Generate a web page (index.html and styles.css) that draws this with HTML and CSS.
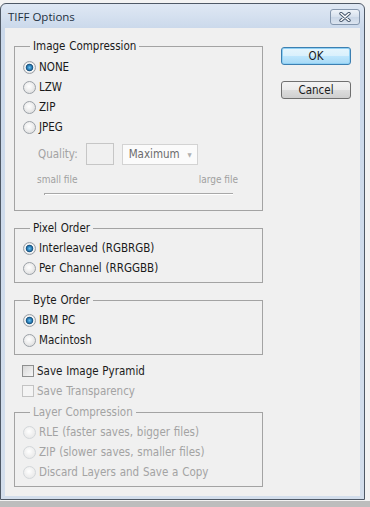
FILE: index.html
```html
<!DOCTYPE html>
<html lang="en">
<head>
  <meta charset="UTF-8" />
  <title>TIFF Options</title>
  <link rel="stylesheet" href="styles.css">
</head>
<body>
<div class="window">
  <div class="titlebar">
    <span class="title">TIFF Options</span>
    <span class="close-btn">
      <svg width="12" height="10" viewBox="0 0 12 10">
        <path d="M2 1.5 L10 8.5 M10 1.5 L2 8.5" stroke="#44546a" stroke-width="3.4" stroke-linecap="round"/>
        <path d="M2 1.5 L10 8.5 M10 1.5 L2 8.5" stroke="#ffffff" stroke-width="1.6" stroke-linecap="round"/>
      </svg>
    </span>
  </div>

  <div class="content">
    <div class="options">
      <fieldset class="group first">
        <legend>Image Compression</legend>
        <div class="row"><span class="radio checked"></span>NONE</div>
        <div class="row"><span class="radio"></span>LZW</div>
        <div class="row"><span class="radio"></span>ZIP</div>
        <div class="row"><span class="radio"></span>JPEG</div>
        <div class="quality">
          <span class="quality-label">Quality:</span>
          <span class="quality-box"></span>
          <span class="select">Maximum<span class="arrow">&#9660;</span></span>
        </div>
        <div class="size-labels">
          <span>small file</span>
          <span>large file</span>
        </div>
        <div class="slider"></div>
      </fieldset>

      <fieldset class="group">
        <legend>Pixel Order</legend>
        <div class="row"><span class="radio checked"></span>Interleaved (RGBRGB)</div>
        <div class="row"><span class="radio"></span>Per Channel (RRGGBB)</div>
      </fieldset>

      <fieldset class="group">
        <legend>Byte Order</legend>
        <div class="row"><span class="radio checked"></span>IBM PC</div>
        <div class="row"><span class="radio"></span>Macintosh</div>
      </fieldset>

      <div class="checks">
        <div class="row"><span class="checkbox"></span>Save Image Pyramid</div>
        <div class="row disabled"><span class="checkbox"></span>Save Transparency</div>
      </div>

      <fieldset class="group layers disabled">
        <legend>Layer Compression</legend>
        <div class="row"><span class="radio"></span>RLE (faster saves, bigger files)</div>
        <div class="row"><span class="radio"></span>ZIP (slower saves, smaller files)</div>
        <div class="row"><span class="radio"></span>Discard Layers and Save a Copy</div>
      </fieldset>
    </div>

    <div class="buttons">
      <button class="btn default">OK</button>
      <button class="btn">Cancel</button>
    </div>
  </div>
</div>
</body>
</html>
```

FILE: styles.css
```css
html, body {
  margin: 0;
  padding: 0;
}
body {
  width: 370px;
  height: 507px;
  overflow: hidden;
  background: linear-gradient(#f3f3f3 0 501px, #bdbdbd 501px);
  font-family: 'DejaVu Sans', Verdana, sans-serif;
  font-stretch: condensed;
  font-size: 11.5px;
  word-spacing: 0.5px;
  color: #1a1a1a;
}
.window {
  width: 365px;
  margin-top: 3px;
  box-sizing: border-box;
  border: 1px solid #4f5966;
  border-radius: 6px 6px 0 0;
  background: linear-gradient(#dfe8f4, #cbd9eb 24px, #d3deec);
}
.titlebar {
  height: 24px;
  display: flex;
  align-items: center;
  justify-content: space-between;
  padding: 0 4px 0 7px;
}
.title {
  font-family: 'Open Sans', 'Noto Sans', sans-serif;
  font-stretch: normal;
  font-size: 11.5px;
  word-spacing: 0;
  color: #22303f;
}
.close-btn {
  width: 30px;
  height: 16px;
  box-sizing: border-box;
  margin-top: 2px;
  display: flex;
  align-items: center;
  justify-content: center;
  border: 1px solid #8496ad;
  border-radius: 3px;
  background: linear-gradient(#eef3f9, #d6e0ed 50%, #c9d6e7 51%, #dbe4ef);
}
.content {
  display: flex;
  margin: 0 4px 3px;
  padding: 11px 0 9px 9px;
  background: #f0f0f0;
}
.options {
  width: 249px;
}
.group {
  margin: 11px 0 0;
  padding: 3px 0 4px 9px;
  border: 1px solid #a3a3a3;
  min-width: 0;
}
.group.first {
  margin-top: 0;
  padding-top: 4px;
  padding-bottom: 15px;
}
.group + .group {
  margin-top: 10px;
}
.group.layers {
  margin-top: 4px;
}
legend {
  margin-left: 6px;
  padding: 0 3px;
  line-height: 14px;
}
.row {
  height: 20px;
  display: flex;
  align-items: center;
  white-space: nowrap;
}
.radio {
  width: 13px;
  height: 13px;
  box-sizing: border-box;
  margin: 0 3px 0 -1px;
  border-radius: 50%;
  border: 1px solid #9ba1a7;
  background: radial-gradient(circle at 45% 40%, #ffffff, #f2f2f2 35%, #d6d6d6);
}
.radio.checked {
  background: radial-gradient(circle at 50% 50%, #6cc2f2 0, #2a7eb7 2.2px, #1a4f78 3.4px, #ffffff 4.2px, #eaeaea 5px, #d0d0d0);
}
.checks {
  margin-top: 6px;
}
.checkbox {
  width: 12px;
  height: 12px;
  box-sizing: border-box;
  margin: 0 3px 0 8px;
  border: 1px solid #8e8f8f;
  background: linear-gradient(135deg, #d8d8d8, #f7f7f7);
}
.disabled, .disabled legend {
  color: #a3a3a3;
}
.disabled .radio {
  border-color: #d3d7da;
  background: radial-gradient(circle at 45% 40%, #ffffff, #f0f0f0 50%, #e4e4e4);
}
.disabled .checkbox {
  border-color: #c3c3c3;
  background: #f4f4f4;
}
.quality {
  display: flex;
  align-items: center;
  margin: 6px 0 0 14px;
  height: 22px;
  color: #a3a3a3;
  font-size: 11.5px;
}
.quality-box {
  width: 28px;
  height: 22px;
  box-sizing: border-box;
  margin-left: 8px;
  border: 1px solid #c6c6c6;
  background: #f0f0f0;
}
.select {
  width: 76px;
  height: 21px;
  box-sizing: border-box;
  margin-left: 8px;
  padding-left: 6px;
  display: flex;
  align-items: center;
  justify-content: space-between;
  border: 1px solid #d3d3d3;
  background: #fbfbfb;
  color: #6b6b6b;
}
.arrow {
  font-size: 6px;
  color: #b0b0b0;
  padding-right: 5px;
}
.size-labels {
  display: flex;
  justify-content: space-between;
  width: 201px;
  margin: 8px 0 0 13px;
  line-height: 14px;
  font-size: 10px;
  word-spacing: 0;
  color: #a0a0a0;
}
.slider {
  width: 188px;
  height: 1px;
  margin: 6px 0 0 20px;
  border-top: 1px solid #a8a8a8;
  border-left: 1px solid #a8a8a8;
  background: #ffffff;
}
.buttons {
  display: flex;
  flex-direction: column;
  gap: 16px;
  margin: 8px 0 0 18px;
}
.btn {
  width: 70px;
  height: 18px;
  padding: 0;
  font-family: 'DejaVu Sans', Verdana, sans-serif;
  font-stretch: condensed;
  font-size: 11.5px;
  color: #1a1a1a;
  border: 1px solid #707070;
  border-radius: 3px;
  background: linear-gradient(#f3f3f3, #ebebeb 50%, #dddddd 51%, #cfcfcf);
}
.btn.default {
  border-color: #3c7fb1;
  background: linear-gradient(#e6f5fd, #d9f0fc 50%, #bee6fd 51%, #a7d9f5);
  box-shadow: inset 0 0 0 1px #8fd0f4;
}
```
